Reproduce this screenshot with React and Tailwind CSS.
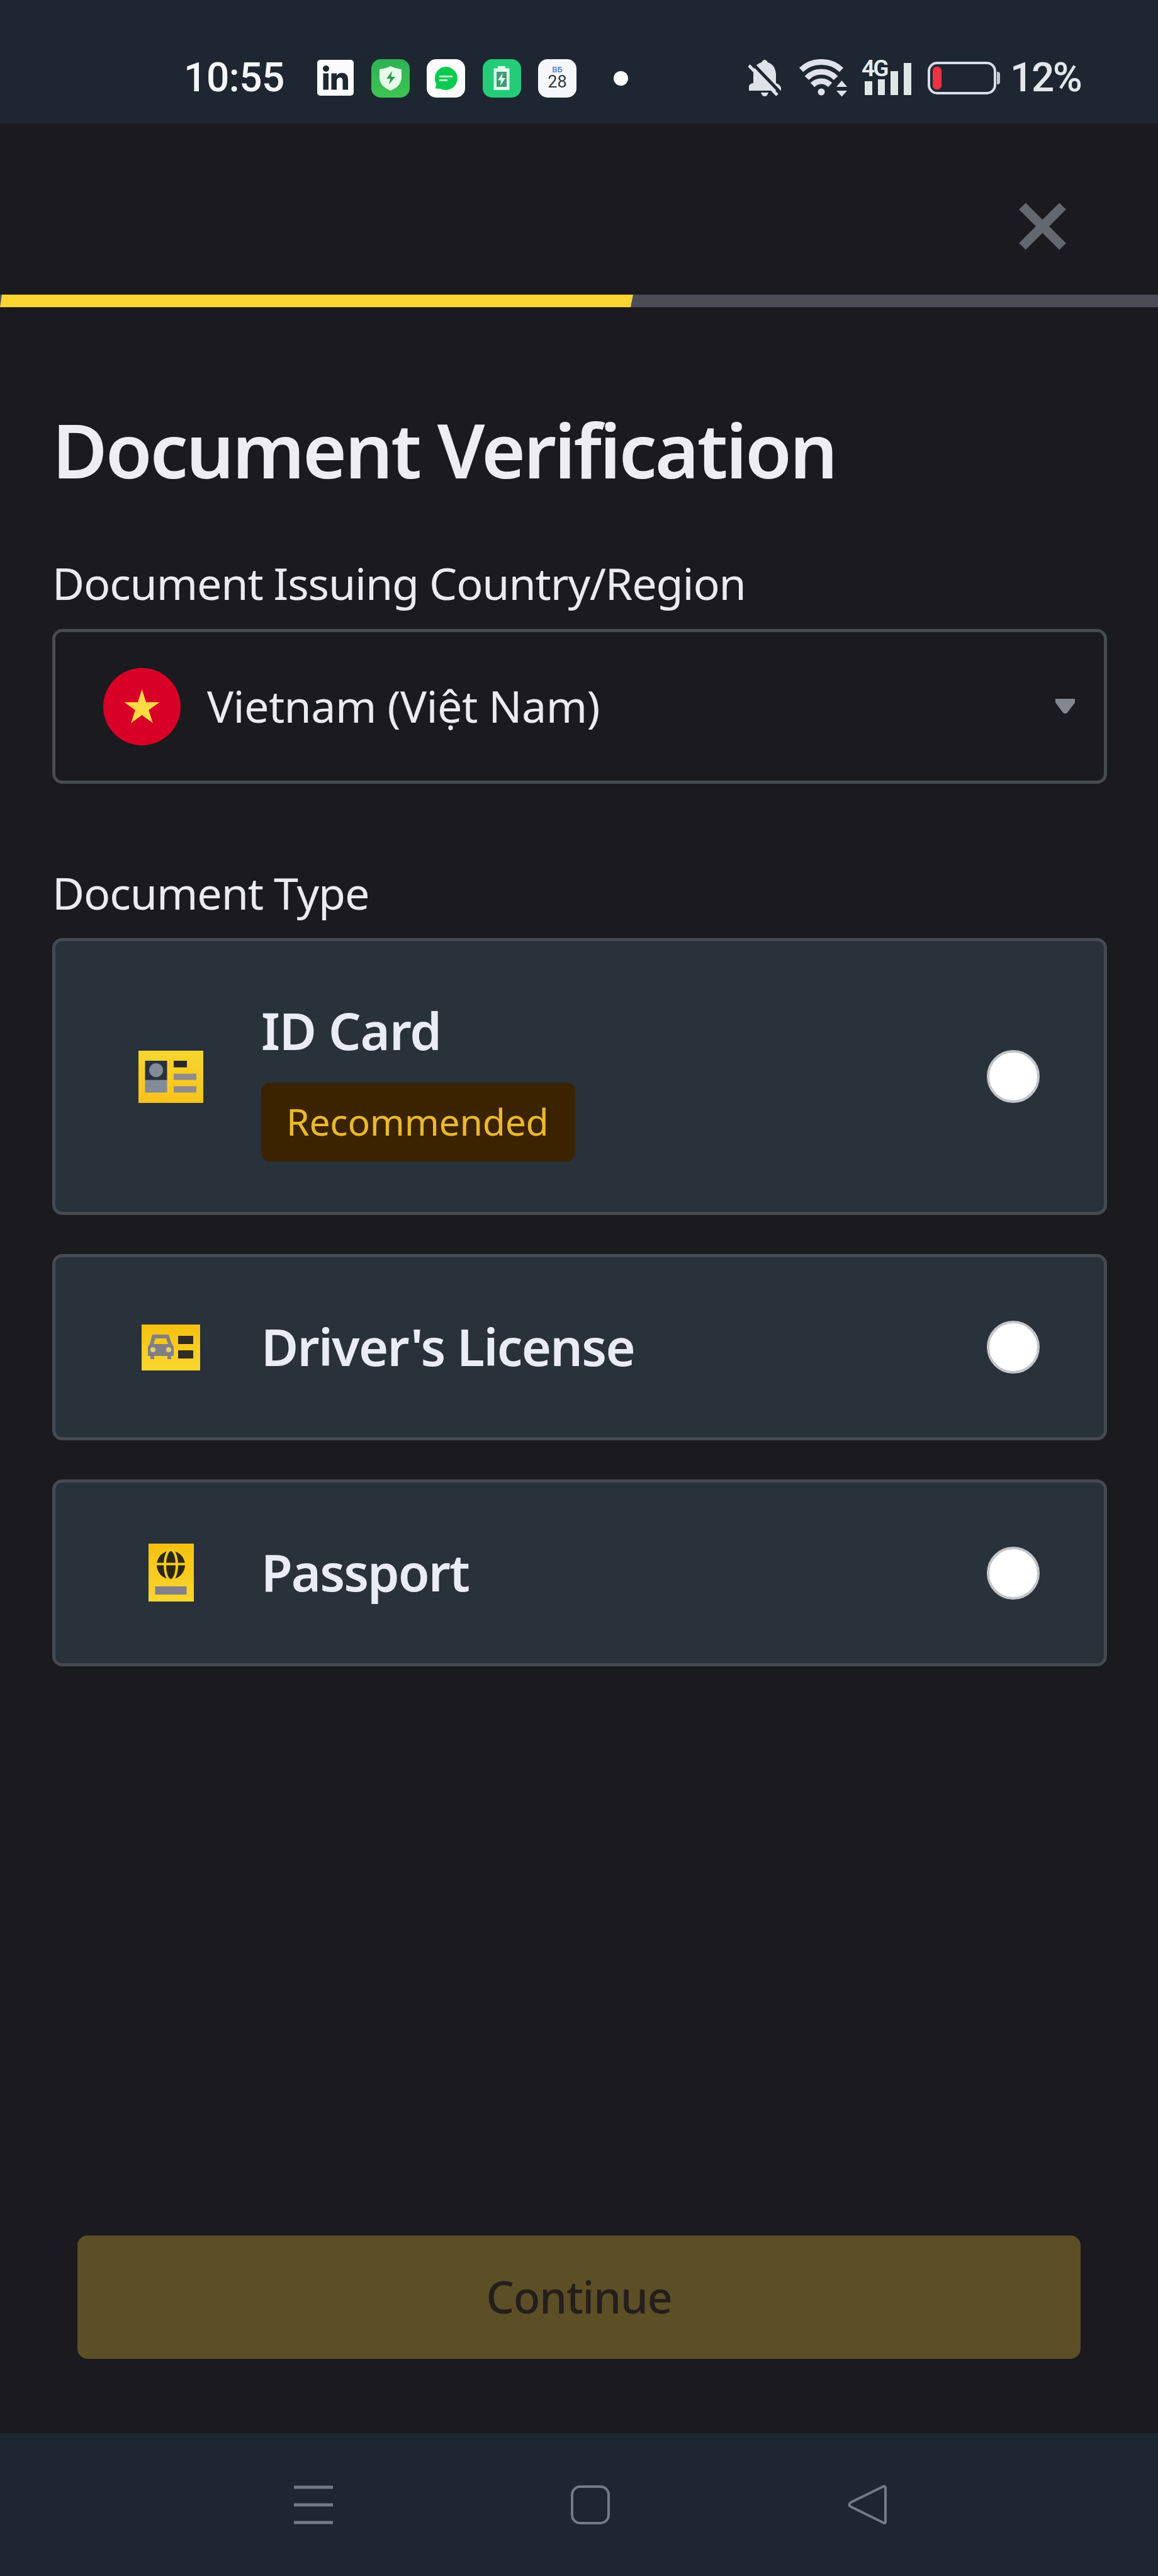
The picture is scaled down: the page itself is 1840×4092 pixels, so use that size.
import React from "react";

const plex = "font-['Noto_Sans',sans-serif]";

function StatusBar() {
  return (
    <div className="flex h-[196px] shrink-0 items-center bg-[#1e2731] pt-[72px] pb-[20px] pl-[292px] pr-[122px] font-['Roboto',sans-serif] text-[64px] leading-none font-medium text-[#f4f6fa]">
      <span className="w-[212px] tracking-[-0.5px]">10:55</span>
      <div className="flex items-center gap-[27.500px]">
        {/* LinkedIn */}
        <svg width="58" height="58" viewBox="0 0 58 58">
          <rect width="58" height="57" rx="5" fill="#fbfbfd" />
          <circle cx="14" cy="14" r="5" fill="#1e2731" />
          <rect x="9.500" y="21.500" width="8.500" height="26" fill="#1e2731" />
          <path d="M22.500 21.500H31V25C33 22.200 36 20.800 39.500 20.800C46 20.800 49 25 49 32V47.500H40.500V33.500C40.500 30 39 28.200 36.300 28.200C33 28.200 31 30.500 31 34V47.500H22.500Z" fill="#1e2731" />
        </svg>
        {/* Phone manager */}
        <svg width="61" height="61" viewBox="0 0 61 61">
          <defs>
            <linearGradient id="pm" x1="0" y1="0" x2="0" y2="1">
              <stop offset="0" stopColor="#2fb155" />
              <stop offset="1" stopColor="#3fc453" />
            </linearGradient>
          </defs>
          <rect width="61" height="61" rx="15" fill="url(#pm)" />
          <path d="M30.500 11Q38 15 48 16V30Q47 43 30.500 50Q14 43 13 30V16Q23 15 30.500 11Z" fill="#e6fbe9" />
          <path d="M33 19L24 31H30L28 40L38 28H31.500Z" fill="#2d9a50" />
        </svg>
        {/* Messages */}
        <svg width="61" height="61" viewBox="0 0 61 61">
          <rect width="61" height="61" rx="15" fill="#fdfdfe" />
          <path d="M30.500 12A18.500 18.500 0 1 1 22 47L13.500 46.500L15.500 40A18.500 18.500 0 0 1 30.500 12Z" fill="#0bcb4f" />
          <path d="M20 27.500H41M20 33.500H33" stroke="#c5f5d4" strokeWidth="3" />
        </svg>
        {/* Battery manager */}
        <svg width="61" height="61" viewBox="0 0 61 61">
          <rect width="61" height="61" rx="15" fill="#25cc78" />
          <path d="M17.500 14.500H24V11H36V14.500H42.500V49H17.500Z" fill="#e0faec" />
          <rect x="22" y="20" width="16" height="24" fill="#3f9b78" />
          <path d="M31.500 22L24 33.500H29L28 42L36 30H31Z" fill="#e0faec" />
        </svg>
        {/* Calendar */}
        <div className="flex size-[61px] flex-col items-center rounded-[15px] bg-[#f6f7fa] pt-[11px]">
          <span className="text-[13px] leading-[12px] font-bold text-[#5b8fdc]">ВБ</span>
          <span className="text-[27px] leading-[27px] font-normal text-[#35373b]">28</span>
        </div>
        <span className="ml-[31px] size-[23px] rounded-full bg-white" />
      </div>
      <div className="ml-auto flex items-center text-[#e3e7ec]">
        {/* Muted bell */}
        <svg width="53" height="60" viewBox="0 0 53 60" fill="#dfe3e8">
          <path d="M1 50V44Q1 39 8 38V24Q8 9 21 5Q26 -3 31 5Q43 9 44 24V38Q50 40 52 45V50Z" />
          <path d="M20 53H32Q30 59 26 59Q22 59 20 53Z" />
          <path d="M5 5L53 55" stroke="#1e2731" strokeWidth="5" />
          <path d="M1 10L46 57" stroke="#dfe3e8" strokeWidth="5" />
        </svg>
        {/* Wi-Fi */}
        <svg className="ml-[28px]" width="77" height="60" viewBox="0 0 77 60" fill="none" stroke="#dfe2ec" strokeWidth="9">
          <path d="M3 17Q17 4 35 4.500Q53 4 67 17" />
          <path d="M12 30Q21 20 35 20Q49 20 58 30" />
          <path d="M21 41Q27 35 35 35Q43 35 49 41" />
          <circle cx="35" cy="52" r="5.500" fill="#dfe2ec" stroke="none" />
          <path d="M59 44L67.500 34L76 44ZM59 50H76L67.500 59.500Z" fill="#dfe2ec" stroke="none" />
        </svg>
        {/* Cellular */}
        <div className="relative ml-[22px] h-[54px] w-[80px]">
          <span className="absolute -top-[6px] left-0 text-[37px] leading-[36px] font-semibold tracking-[-3px] text-[#e6ebee]">4G</span>
          <div className="flex h-full items-end gap-[9px] pl-[5px]">
            <span className="h-[22px] w-[12px] bg-[#dfe6e6]" />
            <span className="h-[25px] w-[11px] bg-[#dfe6e6]" />
            <span className="h-[38px] w-[12px] bg-[#dfe6e6]" />
            <span className="h-[51px] w-[12px] bg-[#dfe6e6]" />
          </div>
        </div>
        {/* Battery */}
        <div className="ml-[25px] flex items-center">
          <div className="flex h-[52px] w-[109px] items-center rounded-[15px] border-[4px] border-[#d9dde8] pl-[4px]">
            <span className="h-[36px] w-[14px] rounded-[6px] bg-[#ee3147]" />
          </div>
          <span className="ml-[1px] h-[20px] w-[5px] rounded-r-[4px] bg-[#c3cad2]" />
        </div>
        <span className="ml-[16px] w-[113px] whitespace-nowrap tracking-[-2.5px]">12%</span>
      </div>
    </div>
  );
}

function Flag() {
  return (
    <svg width="123" height="123" viewBox="0 0 123 123">
      <circle cx="61.500" cy="61.500" r="61.500" fill="#d80027" />
      <path d="M61.500 34L68.100 54.500H89.500L72.200 67L78.800 87.500L61.500 75L44.200 87.500L50.800 67L33.500 54.500H54.900Z" fill="#ffda44" />
    </svg>
  );
}

function Gold({ id }) {
  return (
    <defs>
      <linearGradient id={id} x1="0" y1="0" x2="0" y2="1">
        <stop offset="0" stopColor={id === "g1" ? "#f8d52f" : "#f5c010"} />
        <stop offset="1" stopColor={id === "g1" ? "#f7c31b" : "#f9d72f"} />
      </linearGradient>
    </defs>
  );
}

function IdIcon() {
  return (
    <svg width="103" height="83" viewBox="0 0 103 83">
      <Gold id="g1" />
      <rect width="103" height="83" fill="url(#g1)" />
      <rect x="10.500" y="16" width="35" height="31" fill="#29313d" />
      <rect x="10.500" y="46.500" width="35" height="20" fill="#838a98" />
      <circle cx="28" cy="31" r="11" fill="#838a98" />
      <rect x="56" y="16" width="21" height="10.500" fill="#29292b" />
      <rect x="56" y="36.500" width="36" height="10" fill="#8f8c8c" />
      <rect x="56" y="56.500" width="36" height="10" fill="#8f8c8c" />
    </svg>
  );
}

function LicenseIcon() {
  return (
    <svg width="93" height="73" viewBox="0 0 93 73">
      <Gold id="g2" />
      <rect width="93" height="73" fill="url(#g2)" />
      <path fillRule="evenodd" fill="#827f83" d="M17 16H43L48 31L51 35V50H47V55H41V50H20V55H14V50H10V35L13 31ZM22 22L19 31H42L39 22Z" />
      <circle cx="18" cy="40" r="4" fill="#e3cf7c" />
      <circle cx="43" cy="40" r="4" fill="#e3cf7c" />
      <rect x="58" y="18" width="24" height="13" fill="#302d22" />
      <rect x="58" y="41" width="24" height="13" fill="#302d22" />
    </svg>
  );
}

function PassportIcon() {
  return (
    <svg className="mb-[2px]" width="72" height="92" viewBox="0 0 72 92">
      <Gold id="g3" />
      <rect width="72" height="92" fill="url(#g3)" />
      <circle cx="35.500" cy="34" r="22.500" fill="#2b2615" />
      <ellipse cx="35.500" cy="34" rx="9.500" ry="24" fill="none" stroke="#f6ca1c" strokeWidth="4" />
      <path d="M12 32.500H59" stroke="#f6ca1c" strokeWidth="4" />
      <rect x="10.500" y="68" width="50" height="13" fill="#82808a" />
    </svg>
  );
}

function Option({ icon, title, badge, size, tracking }) {
  return (
    <div className={`flex items-center rounded-[16px] border-[5px] border-[#454a52] bg-[#29313a] pr-[102px] pl-[132px] ${size}`}>
      <div className="flex w-[103px] justify-center">{icon}</div>
      <div className={`ml-[92px] flex flex-col items-start ${badge ? "pt-[17px]" : "pb-[3px]"}`}>
        <span className={`text-[81px] leading-[90px] font-semibold text-[#e9ebf5] ${tracking}`}>{title}</span>
        {badge && (
          <span className="mt-[38px] h-[125px] w-[499px] rounded-[14px] bg-[#3c2300] pl-[40px] text-[59px] leading-[122px] tracking-[-0.3px] text-[#e9b92d]">
            {badge}
          </span>
        )}
      </div>
      <span className="ml-auto size-[84px] rounded-full border-[4px] border-[#c2c5c9] bg-white" />
    </div>
  );
}

export default function App() {
  return (
    <div className={`flex h-[4092px] w-[1840px] flex-col bg-[#1b1a1f] text-[#eaebef] ${plex}`}>
      <StatusBar />

      <header className="flex h-[272px] shrink-0 items-start justify-end pt-[126px] pr-[146px]">
        <svg width="75" height="75" viewBox="0 0 75 75" stroke="#636770" strokeWidth="15">
          <path d="M5.500 5.500L69.500 69.500M69.500 5.500L5.500 69.500" />
        </svg>
      </header>

      <div className="h-[20px] shrink-0 bg-[#4b4c56]">
        <div className="h-full w-[1006px] bg-[#fcd535] [clip-path:polygon(3px_0,100%_0,calc(100%-4px)_100%,0_100%)]" />
      </div>

      <main className="flex flex-1 flex-col pt-[156px] pr-[81px] pl-[83px]">
        <h1 className="text-[120px] leading-[140px] font-semibold tracking-[-3.2px] whitespace-nowrap text-[#eeedf1]">
          Document Verification
        </h1>

        <p className="mt-[102px] text-[70px] leading-[80px] tracking-[-1.15px]">Document Issuing Country/Region</p>
        <div className="mt-[33px] flex h-[246px] items-center rounded-[16px] border-[5px] border-[#484b50] pr-[45px] pl-[76px]">
          <Flag />
          <span className="ml-[42px] pb-[3px] text-[70px] leading-[80px] tracking-[-0.55px]">Vietnam (Việt Nam)</span>
          <svg className="ml-auto" width="33" height="26" viewBox="0 0 33 26">
            <path d="M1 1H32V7L20 23Q16.500 26 13 23L1 7Z" fill="#85878f" />
          </svg>
        </div>

        <p className="mt-[133px] text-[70px] leading-[80px] tracking-[-1.1px]">Document Type</p>
        <div className="mt-[32px] flex flex-col gap-[62px]">
          <Option icon={<IdIcon />} title="ID Card" badge="Recommended" size="h-[440px]" tracking="tracking-[-1.1px]" />
          <Option icon={<LicenseIcon />} title="Driver's License" size="h-[296px]" tracking="tracking-[-1.7px]" />
          <Option icon={<PassportIcon />} title="Passport" size="h-[297px]" tracking="tracking-[-2px]" />
        </div>

        <button className="mr-[42px] ml-[40px] mt-auto mb-[118px] h-[196px] rounded-[16px] bg-[#5c4f25] pb-[2px] text-[70px] leading-none font-medium tracking-[-1.2px] text-[#241f1d]">
          Continue
        </button>
      </main>

      <nav className="flex h-[227px] shrink-0 items-start gap-[376px] bg-[#1e2731] pt-[81px] pl-[466px]">
        <svg width="64" height="64" viewBox="0 0 64 64" stroke="#737b87" strokeWidth="5">
          <path d="M1 5H63M1 33H63M1 61H63" />
        </svg>
        <svg width="64" height="64" viewBox="0 0 64 64" fill="none" stroke="#737b87" strokeWidth="4">
          <rect x="3" y="4" width="58" height="58" rx="13" />
        </svg>
        <svg width="64" height="64" viewBox="0 0 64 64" fill="none" stroke="#737b87" strokeWidth="4" strokeLinejoin="round">
          <path d="M57 4Q61 2 61 7V59Q61 64 57 61L6 36Q1 33 6 29Z" />
        </svg>
      </nav>
    </div>
  );
}
